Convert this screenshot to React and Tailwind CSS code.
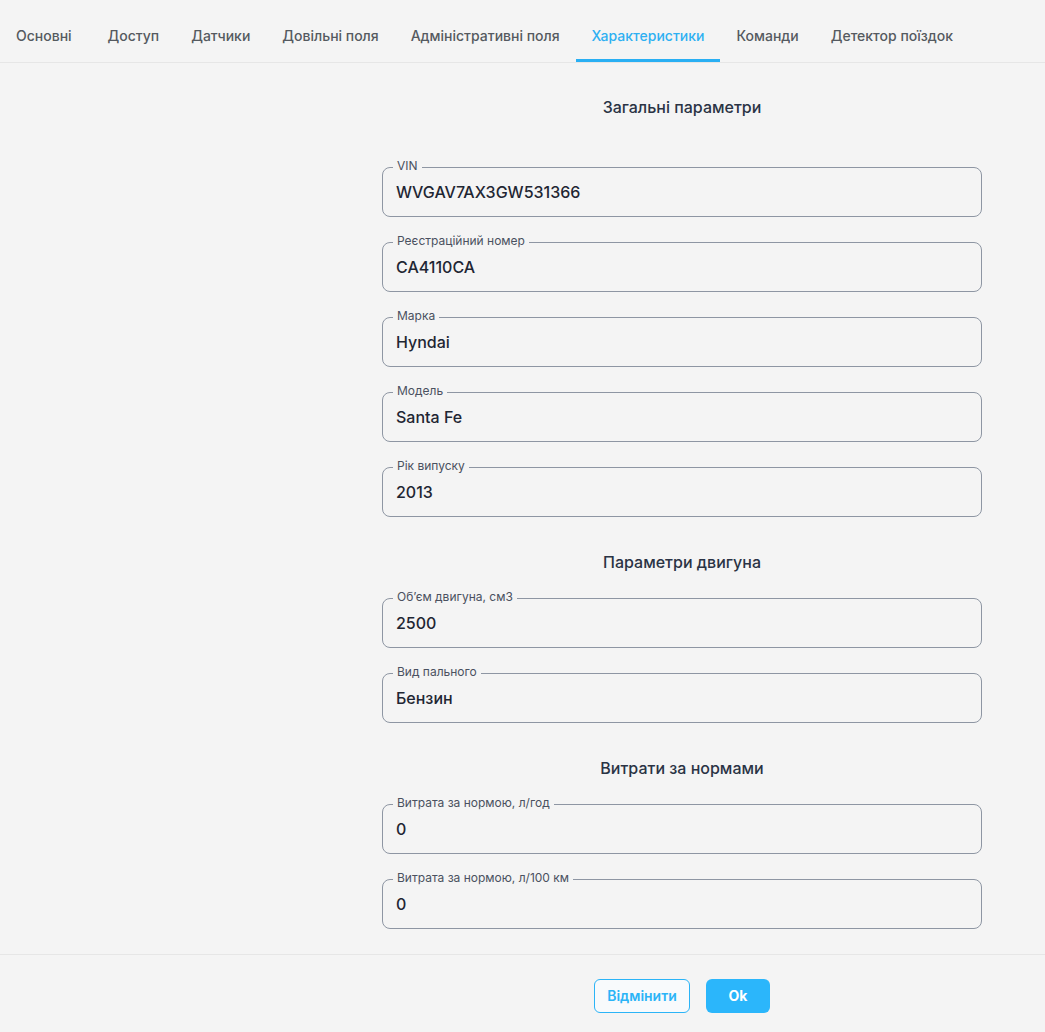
import React from 'react';

const tabs = [
  'Основні',
  'Доступ',
  'Датчики',
  'Довільні поля',
  'Адміністративні поля',
  'Характеристики',
  'Команди',
  'Детектор поїздок',
];

const sections = [
  {
    title: 'Загальні параметри',
    gap: 'mt-[48px]',
    fields: [
      { label: 'VIN', value: 'WVGAV7AX3GW531366' },
      { label: 'Реєстраційний номер', value: 'CA4110CA' },
      { label: 'Марка', value: 'Hyndai' },
      { label: 'Модель', value: 'Santa Fe' },
      { label: 'Рік випуску', value: '2013' },
    ],
  },
  {
    title: 'Параметри двигуна',
    gap: 'mt-[24px]',
    fields: [
      { label: 'Об’єм двигуна, см3', value: '2500' },
      { label: 'Вид пального', value: 'Бензин' },
    ],
  },
  {
    title: 'Витрати за нормами',
    gap: 'mt-[24px]',
    fields: [
      { label: 'Витрата за нормою, л/год', value: '0' },
      { label: 'Витрата за нормою, л/100 км', value: '0' },
    ],
  },
];

const Field = ({ label, value }) => (
  <div className="relative h-[50px] rounded-lg border border-[#8e96a3] flex items-center px-[13px]">
    <span className="absolute -top-[10px] left-[10px] px-1 bg-[#f4f4f4] text-xs leading-4 text-[#4a5160]">
      {label}
    </span>
    <span className="text-base font-medium text-[#1f2633]">{value}</span>
  </div>
);

const App = () => {
  const active = 'Характеристики';

  return (
    <div className="min-h-[1032px] bg-[#f4f4f4] font-['Inter',sans-serif]">
      {/* tabs */}
      <div className="h-[63px] border-b border-[#e6e6e6] flex">
        {tabs.map((tab, i) => (
          <div
            key={tab}
            className={`h-full flex items-center pt-[13px] border-b-[3px] text-sm font-medium ${
              i === 0 ? 'pl-4 pr-5' : 'px-4'
            } ${tab === active ? 'border-[#29aff3] text-[#2eb0f2]' : 'border-transparent text-[#555a60]'}`}
          >
            {tab}
          </div>
        ))}
      </div>

      {/* form */}
      <div className="ml-[382px] w-[600px] pb-[25px]">
        {sections.map((section, i) => (
          <div key={section.title} className={i === 0 ? 'pt-[32px]' : 'pt-[33px]'}>
            <h2 className="text-base leading-6 font-medium text-center text-[#2a3344]">{section.title}</h2>
            <div className={`${section.gap} flex flex-col gap-[25px]`}>
              {section.fields.map((f) => (
                <Field key={f.label} label={f.label} value={f.value} />
              ))}
            </div>
          </div>
        ))}
      </div>

      {/* footer */}
      <div className="border-t border-[#e6e6e6] pt-[24px] pb-[19px]">
        <div className="ml-[382px] w-[600px] flex justify-center gap-4">
          <button className="h-[34px] w-[96px] rounded-md border border-[#2bb4f7] bg-[#f8fafc] text-sm font-semibold text-[#2bb4f7]">
            Відмінити
          </button>
          <button className="h-[34px] w-[64px] rounded-md bg-[#2bb6fb] text-sm font-bold text-white">
            Ok
          </button>
        </div>
      </div>
    </div>
  );
};

export default App;
